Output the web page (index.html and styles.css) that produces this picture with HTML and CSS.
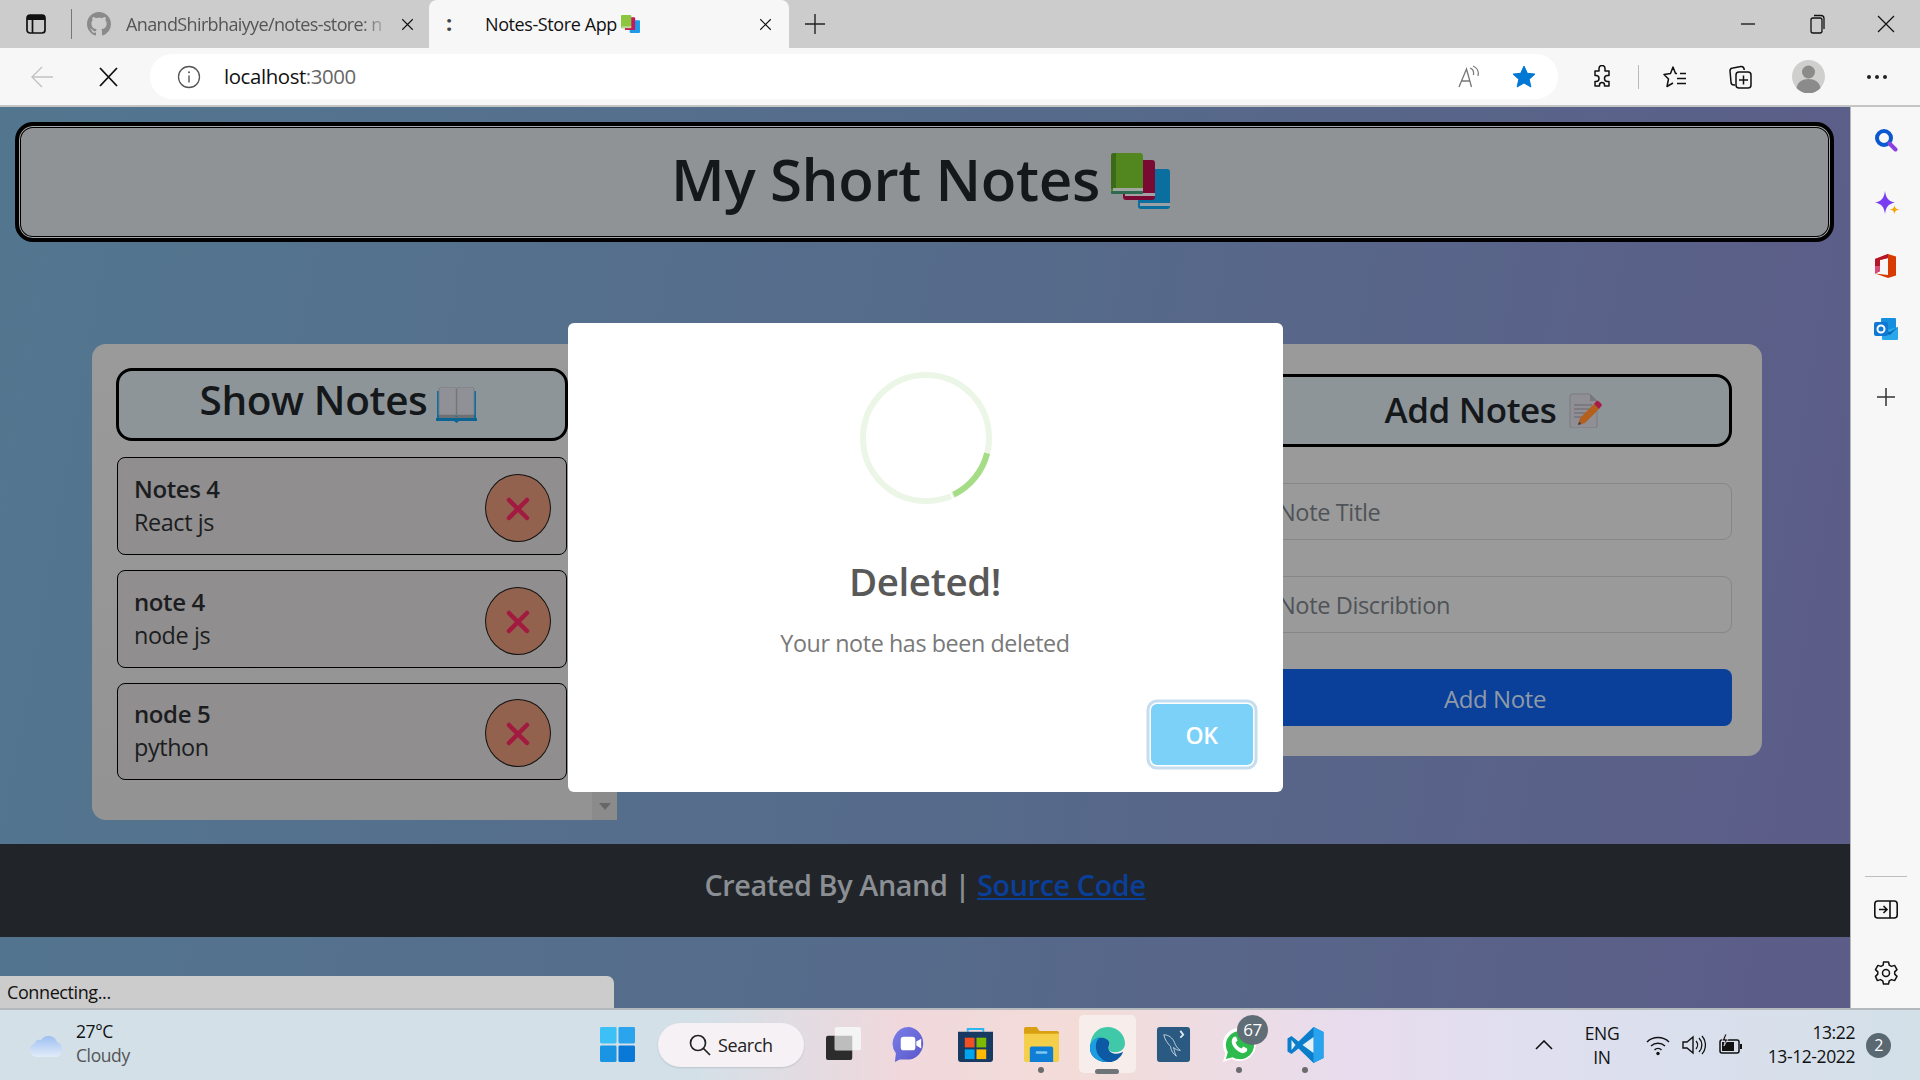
FILE: index.html
```html
<!DOCTYPE html>
<html lang="en">
<head>
<meta charset="utf-8">
<title>Notes-Store App</title>
<link rel="stylesheet" href="styles.css">
</head>
<body>
<svg class="defs" width="0" height="0" aria-hidden="true">
  <symbol id="books" viewBox="0 0 59 56">
    <rect x="27" y="16" width="32" height="40" rx="3" fill="#0a6f9f"/>
    <rect x="29" y="50" width="30" height="3" fill="#9aa0a4"/>
    <rect x="12" y="7" width="32" height="40" rx="3" fill="#7a0a33"/>
    <rect x="14" y="40" width="30" height="3" fill="#a5a0a4"/>
    <rect x="0" y="0" width="32" height="41" rx="3" fill="#52861f"/>
    <path d="M3 0h2v36H0V3a3 3 0 0 1 3-3z" fill="#3c6a16"/>
    <rect x="2" y="35" width="30" height="3" fill="#a2a6a0"/>
    <rect x="0" y="38" width="32" height="3" rx="1" fill="#2d6a52"/>
  </symbol>
  <symbol id="books-bright" viewBox="0 0 59 56">
    <rect x="27" y="16" width="32" height="40" rx="3" fill="#1e9be8"/>
    <rect x="12" y="7" width="32" height="40" rx="3" fill="#c4185e"/>
    <rect x="0" y="0" width="32" height="41" rx="3" fill="#8cc63f"/>
    <rect x="2" y="36" width="30" height="3" fill="#e3e6df"/>
  </symbol>
  <symbol id="x" viewBox="0 0 20 20">
    <path d="M3 3l14 14M17 3L3 17" fill="none" stroke="currentColor" stroke-width="1.5"/>
  </symbol>
  <linearGradient id="teams-grad" x1="0" y1="0" x2="1" y2="1">
    <stop offset="0" stop-color="#7a7fe8"/>
    <stop offset="1" stop-color="#5a55c8"/>
  </linearGradient>
  <linearGradient id="cloud-grad" x1="0" y1="0" x2="0" y2="1">
    <stop offset="0" stop-color="#9dbff0"/>
    <stop offset="1" stop-color="#e2ecfa"/>
  </linearGradient>
</svg>

<header class="tabbar">
  <svg class="ic-toggle" viewBox="0 0 20 20"><rect x="1" y="1" width="18" height="18" rx="3" fill="none" stroke="#111" stroke-width="1.7"/><path d="M1 4a3 3 0 0 1 3-3h12a3 3 0 0 1 3 3v2H1z" fill="#111"/><path d="M6.5 6v13" stroke="#111" stroke-width="1.7"/></svg>
  <span class="tab-sep"></span>
  <svg class="ic-gh" viewBox="0 0 16 16"><path fill="#8a8a8a" d="M8 0C3.58 0 0 3.58 0 8c0 3.54 2.29 6.53 5.47 7.59.4.07.55-.17.55-.38 0-.19-.01-.82-.01-1.49-2.01.37-2.53-.49-2.69-.94-.09-.23-.48-.94-.82-1.13-.28-.15-.68-.52-.01-.53.63-.01 1.08.58 1.23.82.72 1.21 1.87.87 2.33.66.07-.52.28-.87.51-1.07-1.78-.2-3.64-.89-3.64-3.95 0-.87.31-1.59.82-2.15-.08-.2-.36-1.02.08-2.12 0 0 .67-.21 2.2.82.64-.18 1.32-.27 2-.27.68 0 1.36.09 2 .27 1.53-1.04 2.2-.82 2.2-.82.44 1.1.16 1.92.08 2.12.51.56.82 1.27.82 2.15 0 3.07-1.87 3.75-3.65 3.95.29.25.54.73.54 1.48 0 1.07-.01 1.93-.01 2.2 0 .21.15.46.55.38A8.013 8.013 0 0016 8c0-4.42-3.58-8-8-8z"/></svg>
  <span class="tab-title">AnandShirbhaiyye/notes-store: n</span>
  <svg class="ic-tabx first"><use href="#x"/></svg>
  <div class="tab-active">
    <span class="tab-dots">:</span>
    <span class="tab-name">Notes-Store App</span>
    <svg class="ic-fav"><use href="#books-bright"/></svg>
    <svg class="ic-tabx end"><use href="#x"/></svg>
  </div>
  <svg class="ic-plus" viewBox="0 0 20 20"><path d="M10 0v20M0 10h20" stroke="#222" stroke-width="1.4"/></svg>
  <div class="winctl">
    <svg viewBox="0 0 20 20"><path d="M3 10h14" stroke="#111" stroke-width="1.3"/></svg>
    <svg viewBox="0 0 20 20"><rect x="4" y="4" width="11" height="15" rx="2" fill="none" stroke="#111" stroke-width="1.3"/><path d="M7 1.500h7a3 3 0 0 1 3 3V15" fill="none" stroke="#111" stroke-width="1.3"/></svg>
    <svg viewBox="0 0 20 20"><path d="M2 2l16 16M18 2L2 18" stroke="#111" stroke-width="1.2"/></svg>
  </div>
</header>

<nav class="toolbar">
  <div class="tb-cell"><svg class="ic24" viewBox="0 0 24 24"><path d="M23 12H2M12 2L2 12l10 10" fill="none" stroke="#c2c2c2" stroke-width="1.4"/></svg></div>
  <div class="tb-cell"><svg class="ic24" viewBox="0 0 24 24"><path d="M4 3l17 18M21 3L4 21" stroke="#111" stroke-width="1.8"/></svg></div>
  <div class="address">
    <svg class="ic24" viewBox="0 0 24 24"><circle cx="12" cy="12" r="10.500" fill="none" stroke="#555" stroke-width="1.300"/><path d="M12 10.500v7" stroke="#555" stroke-width="1.400"/><circle cx="12" cy="7.300" r="1" fill="#555"/></svg>
    <span class="url">localhost<span class="url-port">:3000</span></span>
    <svg class="ic24 read" viewBox="0 0 24 24"><path d="M2 22L9.500 4 14.500 22M4.500 16h8" fill="none" stroke="#777" stroke-width="1.300"/><path d="M13 3c3 1 4 4 3.500 7M16 1c4 1.500 6 5.500 5 10" fill="none" stroke="#777" stroke-width="1.300"/></svg>
    <svg class="ic24" viewBox="0 0 24 24"><path d="M12 1l3.300 7.300 7.700.8-5.800 5.200 1.700 7.700L12 18l-6.900 4 1.700-7.700L1 9.100l7.700-.8z" fill="#0078d4" stroke="#0078d4" stroke-linejoin="round"/></svg>
  </div>
  <svg class="ic24 t-ext" viewBox="0 0 24 24"><path d="M9 3.500a3 3 0 0 1 6 0V6h4v4.500h-1.500a3 3 0 0 0 0 6H19V21h-4.500v-1a2.500 2.500 0 0 0-5 0v1H5v-4.500h1a3 3 0 0 0 0-6H5V6h4z" fill="none" stroke="#111" stroke-width="1.500" stroke-linejoin="round"/></svg>
  <span class="t-sep"></span>
  <svg class="ic24 t-fav" viewBox="0 0 24 24"><path d="M14 8.500h-1.500L10 2 7.500 8.500 1 9.500l4.500 4.500L4 21.500l6-3.500M17 8.500h6M14 13.500h9M14 18.500h9" fill="none" stroke="#111" stroke-width="1.500" stroke-linejoin="round"/></svg>
  <svg class="ic24 t-col" viewBox="0 0 24 24"><path d="M7 20H6a3 3 0 0 1-3-3L2 6a3 3 0 0 1 3-3l8-1.500c2-.2 3 1 3.300 3.500" fill="none" stroke="#111" stroke-width="1.500"/><rect x="8" y="7" width="15" height="16" rx="3" fill="none" stroke="#111" stroke-width="1.500"/><path d="M15.500 10.500v9M11 15h9" stroke="#111" stroke-width="1.500"/></svg>
  <svg class="ic-avatar" viewBox="0 0 33 33"><circle cx="16.500" cy="16.500" r="16.500" fill="#cfcfcd"/><circle cx="16.500" cy="12" r="6.500" fill="#8b8b8b"/><path d="M4.500 28c1-6 6-9 12-9s11 3 12 9a16 16 0 0 1-24 0z" fill="#8b8b8b"/></svg>
  <span class="t-more"><i></i><i></i><i></i></span>
</nav>

<div class="main">
  <main class="page">
    <div class="banner">
      <h1 class="banner-title">My Short Notes</h1>
      <svg class="ic-books"><use href="#books"/></svg>
    </div>

    <div class="columns">
      <section class="panel panel-list">
        <div class="panel-body">
          <div class="heading heading-show">
            <h2>Show Notes</h2>
            <svg class="ic-open" viewBox="0 0 41 36"><path d="M1 4h39v27H1z" fill="#0a6f9f"/><path d="M3 2a3 3 0 0 1 3-2h11c2 0 3.500 1 3.500 2 0-1 1.500-2 3.500-2h11a3 3 0 0 1 3 2v26H3z" fill="#8f9196" stroke="#7c7e83"/><path d="M20.500 2v27" stroke="#73757a" stroke-width="1.400"/><path d="M3 28h15l2.500 2 2.500-2h15v3H3z" fill="#6e7074"/><path d="M0 31h41v3H23l-2.500 2-2.500-2H0z" fill="#0a6592"/></svg>
          </div>
          <div class="note-list">
            <article class="note">
              <div class="note-text"><h3>Notes 4</h3><p>React js</p></div>
              <button class="note-del"><svg viewBox="0 0 24 24"><path d="M3 3l18 18M21 3L3 21"/></svg></button>
            </article>
            <article class="note">
              <div class="note-text"><h3>note 4</h3><p>node js</p></div>
              <button class="note-del"><svg viewBox="0 0 24 24"><path d="M3 3l18 18M21 3L3 21"/></svg></button>
            </article>
            <article class="note">
              <div class="note-text"><h3>node 5</h3><p>python</p></div>
              <button class="note-del"><svg viewBox="0 0 24 24"><path d="M3 3l18 18M21 3L3 21"/></svg></button>
            </article>
          </div>
        </div>
        <div class="scrollbar"><span class="scroll-down"></span></div>
      </section>

      <section class="panel panel-form">
        <div class="heading heading-add">
          <h2>Add Notes</h2>
          <svg class="ic-memo" viewBox="0 0 33 35"><path d="M1 3a2 2 0 0 1 2-2h18l7 7v25a2 2 0 0 1-2 2H3a2 2 0 0 1-2-2z" fill="#8f8f95" stroke="#7a7a80"/><path d="M21 1v7h7z" fill="#77777c"/><path d="M5 12h18M5 16h18M5 20h12M5 24h8" stroke="#66666c" stroke-width="1.200"/><path d="M9 32l2-7L25 11l5 5-14 14z" fill="#b4601c"/><path d="M25 11l2-2.500a2 2 0 0 1 3 0l2 2a2 2 0 0 1 0 3L30 16z" fill="#a81c45"/><path d="M9 32l1-3.500 2.500 2.500z" fill="#3d3d3d"/></svg>
        </div>
        <input class="field" type="text" placeholder="Note Title">
        <input class="field" type="text" placeholder="Note Discribtion">
        <button class="add-btn">Add Note</button>
      </section>
    </div>

    <footer class="footer">Created By Anand | <a href="#">Source Code</a></footer>

    <div class="status">Connecting...</div>

    <div class="overlay">
      <div class="modal">
        <svg class="spinner" viewBox="0 0 132 132">
          <circle cx="66" cy="66" r="63" fill="none" stroke="#ecf6e6" stroke-width="6"/>
          <path d="M127.100 81.200A63 63 0 0 1 93.600 122.600" fill="none" stroke="#a5dc86" stroke-width="6"/>
          <path d="M90 120.500l3 6" stroke="#fff" stroke-width="1.500"/>
        </svg>
        <h2 class="modal-title">Deleted!</h2>
        <p class="modal-text">Your note has been deleted</p>
        <div class="modal-actions"><button class="ok-btn">OK</button></div>
      </div>
    </div>
  </main>

  <aside class="sidebar">
    <svg class="side-ic" viewBox="0 0 24 24"><circle cx="10" cy="10" r="7" fill="none" stroke="#0a58d0" stroke-width="4"/><path d="M15.500 15.500l6 6" stroke="#8a3fe0" stroke-width="4" stroke-linecap="round"/></svg>
    <svg class="side-ic side-star" viewBox="0 0 26 26"><path d="M11 0c1 7.500 3.500 10 10 11.500-6.500 1.500-9 4-10 11.500C10 15.500 7.500 13 1 11.500 7.500 10 10 7.500 11 0z" fill="#7a3cf0"/><path d="M20.500 14c.5 3 1.500 4 5 4.500-3.500.5-4.500 1.500-5 5-.5-3.500-1.500-4.500-5-5 3.500-.5 4.500-1.500 5-4.500z" fill="#f0a80c"/></svg>
    <svg class="side-ic" viewBox="0 0 24 24"><path d="M14 0l8 2.500v19L14 24 1 19.500l13 1.500V4L6 6v11l-5 2.500V5z" fill="#d83b01"/><path d="M14 0L1 5v14.500L6 17V6l8-2z" fill="#b5172a"/><path d="M1 12v7.500L6 17v-5z" fill="#d84a7c"/></svg>
    <svg class="side-ic" viewBox="0 0 24 24"><rect x="7" y="1" width="15" height="12" rx="1" fill="#1490df"/><path d="M24 10v12a1 1 0 0 1-1 1H9a1 1 0 0 1-1-1V14z" fill="#28a8ea"/><path d="M24 10l-8 5-8-2v3l8 2z" fill="#0a6cb8"/><rect x="0" y="5" width="14" height="14" rx="2" fill="#0f78d4"/><circle cx="7" cy="12" r="3.500" fill="none" stroke="#fff" stroke-width="2"/></svg>
    <svg class="side-ic side-plus" viewBox="0 0 24 24"><path d="M12 3v18M3 12h18" stroke="#333" stroke-width="1.500"/></svg>
    <div class="side-bottom">
      <span class="side-sep"></span>
      <svg class="side-ic" viewBox="0 0 24 24"><rect x="0.800" y="3" width="22.400" height="17" rx="3" fill="none" stroke="#111" stroke-width="1.600"/><path d="M16 3v17M5 11.500h8M9.500 8l3.500 3.500L9.500 15" fill="none" stroke="#111" stroke-width="1.600"/></svg>
      <svg class="side-ic" viewBox="0 0 24 24"><path d="M9.500 1h5l.8 3.200 2.200 1.200 3.100-1 2.400 4.200-2.300 2.300v2.200l2.300 2.300-2.400 4.200-3.100-1-2.200 1.200-.8 3.200h-5l-.8-3.200-2.200-1.200-3.100 1L1.500 15.400l2.300-2.300v-2.200L1.500 8.600l2.400-4.200 3.100 1 2.200-1.200z" fill="none" stroke="#111" stroke-width="1.500" stroke-linejoin="round"/><circle cx="12" cy="12" r="3.500" fill="none" stroke="#111" stroke-width="1.500"/></svg>
    </div>
  </aside>
</div>

<footer class="taskbar">
  <div class="tk-left">
    <svg class="ic-weather" viewBox="0 0 36 24"><path d="M8 23a7 7 0 0 1-2.500-13.500A5.500 5.500 0 0 1 12 6 9 9 0 0 1 28 8a8 8 0 0 1 0 15z" fill="url(#cloud-grad)"/></svg>
    <div class="tk-weather"><span class="tk-temp">27°C</span><span class="tk-cond">Cloudy</span></div>
  </div>
  <div class="tk-apps">
    <div class="tk-app">
      <svg class="tk-ic" viewBox="0 0 36 36"><rect width="17" height="17" x="0" y="0" rx="1.500" fill="#3cc0f6"/><rect width="17" height="17" x="19" y="0" rx="1.500" fill="#2aa4ec"/><rect width="17" height="17" x="0" y="19" rx="1.500" fill="#1a95e4"/><rect width="17" height="17" x="19" y="19" rx="1.500" fill="#0a78d6"/></svg>
    </div>
    <div class="tk-search">
      <svg class="ic-search" viewBox="0 0 22 22"><circle cx="9" cy="9" r="7.500" fill="none" stroke="#222" stroke-width="1.700"/><path d="M14.500 14.500l6.500 6.500" stroke="#222" stroke-width="1.700"/></svg>
      <span>Search</span>
    </div>
    <div class="tk-app">
      <svg class="tk-ic" viewBox="0 0 36 36"><rect x="0" y="9" width="27" height="25" rx="2" fill="#2c2c2c"/><rect x="9" y="0" width="27" height="24" rx="2" fill="#f4f4f4"/><rect x="9" y="9" width="18" height="15" fill="#bdbdbd"/></svg>
    </div>
    <div class="tk-app">
      <svg class="tk-ic" viewBox="0 0 36 36"><path d="M18 0a17 17 0 0 1 0 33.500H8L3 36l1-9A17 17 0 0 1 18 0z" fill="url(#teams-grad)"/><rect x="9" y="10" width="15" height="14" rx="3" fill="#fff"/><path d="M25 15l5-3v10l-5-3z" fill="#fff"/></svg>
    </div>
    <div class="tk-app">
      <svg class="tk-ic" viewBox="0 0 36 36"><path d="M10 5V2h16v3" fill="none" stroke="#2fb6f0" stroke-width="2"/><path d="M0 5h36v28a3 3 0 0 1-3 3H3a3 3 0 0 1-3-3z" fill="#173a63"/><rect x="7" y="11" width="10" height="10" fill="#f25022"/><rect x="19" y="11" width="10" height="10" fill="#7fba00"/><rect x="7" y="23" width="10" height="10" fill="#00a4ef"/><rect x="19" y="23" width="10" height="10" fill="#ffb900"/></svg>
    </div>
    <div class="tk-app dot">
      <svg class="tk-ic" viewBox="0 0 36 36"><path d="M0 2a2 2 0 0 1 2-2h11l3 4h18a2 2 0 0 1 2 2v4H0z" fill="#d9a013"/><path d="M0 7h36v27a2 2 0 0 1-2 2H2a2 2 0 0 1-2-2z" fill="#f6cf4a"/><path d="M8 20h20a2 2 0 0 1 2 2v14H6V22a2 2 0 0 1 2-2z" fill="#0f7ed4"/><rect x="12" y="25" width="12" height="2.500" rx="1" fill="#7cc8f2"/></svg>
    </div>
    <div class="tk-app edge">
      <svg class="tk-ic" viewBox="0 0 36 36"><path d="M18 0c10 0 18 7.500 18 17 0 6-5 9-10 9-4 0-7-1.500-7-4.500 0-1.500 1-2 1-4 0-3-3-5.500-7-5.500C7 12 2 17 0 22 0 9 7 0 18 0z" fill="#3fc9a8"/><path d="M0 22c0-6 5-11 12-11 4 0 8 2.500 8 6 0 1.500-1 2.500-1 4.500 0 3 3 6 8 6 2.500 0 5-.7 7-2-2 6-8 11-16 11C8 36 0 30 0 22z" fill="#0c59a4"/><path d="M0 22C0 15 5 11 11 10c-3 2-5 5-5 10 0 7 5 14 12 16C8 36 0 30 0 22z" fill="#1b9de2"/></svg>
      <span class="edge-bar"></span>
    </div>
    <div class="tk-app">
      <svg class="tk-ic" viewBox="0 0 36 36"><rect width="34" height="36" x="1" rx="3" fill="#2a5a82"/><path d="M8 8c5 0 9 3 11 8 1 3 3 6 6 8-3 0-5-1-7-3 1 3 1 6 3 9-3-2-6-6-6-10-3-3-6-7-7-12z" fill="none" stroke="#bcd0de" stroke-width="1"/><path d="M25 4l3 4-3 3" fill="none" stroke="#e3edf4" stroke-width="1.800"/></svg>
    </div>
    <div class="tk-app dot">
      <svg class="tk-ic" viewBox="0 0 36 36"><path d="M1 36l2.500-9A17 17 0 1 1 10 33z" fill="#fff"/><path d="M4 33l2-7A14.500 14.500 0 1 1 11 31z" fill="#2dbb4e"/><path d="M13 10c-1 0-3 2-3 5 0 5 6 11 11 12 3 0 5-2 5-3.500l-.3-1.500-3.700-2-2 2c-3-1-5-3-6-6l2-2-1.500-4z" fill="#fff"/></svg>
      <span class="badge">67</span>
    </div>
    <div class="tk-app dot">
      <svg class="tk-ic vs" viewBox="0 0 36 36"><path d="M26 0l10 5v26l-10 5-15-14.500L4 27l-4-2.500v-13L4 9l7 5.500z" fill="#0a7ecb"/><path d="M26 0l10 5v26l-10 5z" fill="#2aa3ef"/><path d="M26 10L15 18l11 8z" fill="#e4eff6"/><path d="M4 13l4 5-4 5z" fill="#e4eff6"/></svg>
    </div>
  </div>
  <div class="tk-tray">
    <svg class="ic-chev" viewBox="0 0 18 10"><path d="M1 9l8-8 8 8" fill="none" stroke="#111" stroke-width="1.600"/></svg>
    <div class="tk-lang"><span>ENG</span><span>IN</span></div>
    <svg class="tray-ic wifi" viewBox="0 0 24 24"><path d="M1 9a16 16 0 0 1 22 0M5 13a10.500 10.500 0 0 1 14 0M8.500 17a5 5 0 0 1 7 0" fill="none" stroke="#111" stroke-width="1.500"/><circle cx="12" cy="20.500" r="1.700" fill="#111"/></svg>
    <svg class="tray-ic vol" viewBox="0 0 24 24"><path d="M1 9v6h4l6 5V4L5 9z" fill="none" stroke="#111" stroke-width="1.400"/><path d="M14 8a6 6 0 0 1 0 8M17 5a10 10 0 0 1 0 14M20 3a13.500 13.500 0 0 1 0 18" fill="none" stroke="#111" stroke-width="1.300"/></svg>
    <svg class="tray-ic bat" viewBox="0 0 24 24"><rect x="1" y="7" width="19" height="13" rx="2" fill="none" stroke="#111" stroke-width="1.500"/><rect x="3" y="9" width="12" height="9" fill="#111"/><rect x="21" y="11" width="2" height="5" fill="#111"/><path d="M6 1L3 8h3l-1 5 4-7H6l2-5z" fill="#111" stroke="#e4dfee" stroke-width=".8"/></svg>
    <div class="tk-clock"><span>13:22</span><span>13-12-2022</span></div>
    <span class="tk-notif">2</span>
  </div>
</footer>
</body>
</html>
```

FILE: styles.css
```css
* { box-sizing: border-box; }
html, body { margin: 0; padding: 0; }
body {
  width: 1920px;
  height: 1080px;
  overflow: hidden;
  display: flex;
  flex-direction: column;
  font-family: "Open Sans", "Noto Sans", sans-serif;
  letter-spacing: -0.025em;
  color: #111;
}
h1, h2, h3, p { margin: 0; font-weight: 400; }
button, input { font: inherit; letter-spacing: inherit; }
svg { display: block; flex: none; }
.defs { position: absolute; }

/* Tab strip */
.tabbar {
  height: 48px;
  flex: none;
  display: flex;
  align-items: center;
  padding-left: 26px;
  background: #cccccc;
}
.ic-toggle { width: 20px; height: 20px; }
.tab-sep { width: 1px; height: 30px; margin-left: 25px; background: #777; }
.ic-gh { width: 24px; height: 24px; margin-left: 15px; }
.tab-title {
  width: 261px;
  margin-left: 15px;
  font-size: 18px;
  letter-spacing: -0.035em;
  white-space: nowrap;
  color: #555;
  -webkit-mask-image: linear-gradient(to right, #000 90%, rgba(0,0,0,.15));
  mask-image: linear-gradient(to right, #000 90%, rgba(0,0,0,.15));
}
.ic-tabx { width: 15px; height: 15px; color: #111; }
.ic-tabx.first { margin-left: 13px; }
.tab-active {
  width: 360px;
  height: 48px;
  margin-left: 14px;
  display: flex;
  align-items: center;
  padding-left: 16px;
  background: #f7f7f7;
  border-radius: 8px 8px 0 0;
}
.tab-dots { width: 8px; font-size: 22px; font-weight: 700; line-height: 1; margin-top: -4px; color: #444; text-align: center; }
.tab-name { margin-left: 32px; font-size: 18px; color: #111; }
.ic-fav { width: 19px; height: 18px; margin-left: 4px; }
.ic-tabx.end { margin-left: auto; margin-right: 16px; }
.ic-plus { width: 20px; height: 20px; margin-left: 16px; }
.winctl { margin-left: auto; display: flex; gap: 49px; padding-right: 24px; }
.winctl svg { width: 20px; height: 20px; }

/* Toolbar */
.toolbar {
  height: 59px;
  flex: none;
  display: flex;
  align-items: center;
  padding: 0 0 0 9px;
  background: #f7f7f7;
  border-bottom: 2px solid #c4c4c4;
}
.ic24 { width: 24px; height: 24px; }
.tb-cell { width: 66px; display: flex; justify-content: center; }
.address {
  width: 1408px;
  height: 45px;
  margin-left: 9px;
  display: flex;
  align-items: center;
  padding: 0 22px 0 27px;
  background: #fff;
  border-radius: 22px;
}
.url { margin: -2px 0 0 23px; font-size: 20.4px; color: #111; }
.url-port { color: #666; }
.read { margin-left: auto; margin-right: 31px; }
.t-ext { margin-left: 32px; }
.t-sep { width: 1px; height: 24px; margin-left: 24px; background: #bbb; }
.t-fav { margin-left: 24px; }
.t-col { margin-left: 41px; }
.ic-avatar { width: 33px; height: 33px; margin-left: 40px; }
.t-more { margin-left: 42px; display: flex; gap: 4px; }
.t-more i { width: 4px; height: 4px; border-radius: 50%; background: #222; }

/* Page */
.main { flex: 1; min-height: 0; display: flex; }
.page {
  position: relative;
  width: 1851px;
  padding-top: 15px;
  background: linear-gradient(100deg, #53768f 0%, #566a8a 55%, #5c5c88 100%);
  border-right: 1px solid #b8b8b8;
  overflow: hidden;
}
.banner {
  width: 1819px;
  height: 120px;
  margin-left: 15px;
  padding: 0 8px 6px 0;
  display: flex;
  align-items: center;
  justify-content: center;
  gap: 11px;
  background: #8f9396;
  border: 4px solid #000;
  border-radius: 18px;
  box-shadow: inset 0 0 0 1px #a5a8aa, inset 0 0 0 2px #000;
}
.banner-title { font-size: 58.300px; font-weight: 600; line-height: 1; color: #15181b; }
.ic-books { width: 59px; height: 56px; margin-top: 4px; }

.columns {
  display: flex;
  justify-content: space-between;
  align-items: flex-start;
  margin-top: 102px;
  padding: 0 88px 0 92px;
}
.panel { background: #9a9a9a; border-radius: 14px; }
.panel-list {
  width: 525px;
  height: 476px;
  display: flex;
  overflow: hidden;
  border-radius: 14px 0 0 14px;
  background: linear-gradient(#9a9a9a, #939393);
}
.panel-body { width: 500px; padding: 24px 24px 0; }
.scrollbar {
  width: 25px;
  display: flex;
  align-items: flex-end;
  justify-content: center;
  padding-bottom: 10px;
  background: #8b8b8b;
}
.scroll-down {
  width: 0;
  height: 0;
  border: 6px solid transparent;
  border-top: 7px solid #676767;
  border-bottom: 0;
}
.panel-form {
  width: 534px;
  height: 412px;
  padding: 30px 30px 0;
  display: flex;
  flex-direction: column;
}
.heading {
  height: 73px;
  display: flex;
  align-items: center;
  justify-content: center;
  flex: none;
  background: #8e9599;
  border: 3px solid #000;
  border-radius: 16px;
  color: #15181b;
}
.heading-show { gap: 9px; padding-right: 7px; }
.heading-show h2 { font-size: 40.500px; font-weight: 600; line-height: 1; margin-top: -8px; }
.ic-open { width: 41px; height: 36px; }
.heading-add { gap: 12px; padding-right: 4px; padding-bottom: 3px; }
.heading-add h2 { font-size: 35px; font-weight: 600; line-height: 1; }
.ic-memo { width: 33px; height: 35px; margin-top: 2px; }

.note-list { margin: 16px 1px 0; display: flex; flex-direction: column; gap: 15px; }
.note {
  height: 98px;
  display: flex;
  align-items: center;
  justify-content: space-between;
  padding: 0 15px 0 16px;
  background: #908e8e;
  border: 1px solid #000;
  border-radius: 8px;
  color: #1b1d20;
}
.note:last-child { height: 97px; }
.note-text { margin-top: -2px; }
.note-text h3 { font-size: 24px; font-weight: 600; line-height: 33px; }
.note-text p { margin-top: 1px; font-size: 23.400px; line-height: 33px; }
.note-del {
  width: 66px;
  height: 68px;
  margin-top: 3px;
  padding: 2px 0 0;
  display: flex;
  align-items: center;
  justify-content: center;
  background: #92624e;
  border: 1px solid #111;
  border-radius: 50%;
}
.note-del svg { width: 24px; height: 24px; }
.note-del path { fill: none; stroke: #a31a40; stroke-width: 4.500; stroke-linecap: round; }

.field {
  height: 57px;
  margin-top: 36px;
  flex: none;
  padding: 1px 19px 0;
  font-size: 23.600px;
  background: transparent;
  border: 1px solid #868686;
  border-radius: 9px;
  outline: none;
}
.field::placeholder { color: #4f5358; opacity: 1; }
.add-btn {
  height: 57px;
  margin-top: 36px;
  flex: none;
  padding: 1px 0 0;
  font-size: 24px;
  color: #8f9aa8;
  background: #0a4099;
  border: 0;
  border-radius: 8px;
}

.footer {
  height: 93px;
  margin-top: 24px;
  padding-bottom: 12px;
  display: flex;
  align-items: center;
  justify-content: center;
  font-size: 28.800px;
  font-weight: 600;
  white-space: pre;
  color: #8b8f94;
  background: #212529;
}
.footer a { color: #0a3f99; text-decoration: underline; }

.status {
  position: absolute;
  left: 0;
  bottom: 0;
  width: 614px;
  height: 32px;
  padding: 4px 0 0 7px;
  font-size: 18px;
  line-height: 24px;
  color: #111;
  background: #cccccc;
  border-radius: 0 7px 0 0;
}
.overlay {
  position: absolute;
  inset: 0;
  display: flex;
  align-items: center;
  justify-content: center;
}
.modal {
  width: 715px;
  height: 469px;
  padding-top: 49px;
  display: flex;
  flex-direction: column;
  align-items: center;
  background: #fff;
  border-radius: 6px;
}
.spinner { width: 132px; height: 132px; margin-left: 2px; }
.modal-title { margin-top: 50px; font-size: 38.500px; font-weight: 600; line-height: 54px; color: #595959; }
.modal-text { margin-top: 19px; font-size: 23.300px; line-height: 32px; color: #797979; }
.modal-actions { align-self: flex-end; margin-top: 45px; margin-right: 30px; }
.ok-btn {
  display: block;
  width: 102px;
  height: 61px;
  padding: 0;
  font-size: 23px;
  font-weight: 600;
  color: #fff;
  background: #7cd1f9;
  border: 0;
  border-radius: 6px;
  box-shadow: 0 0 0 1.500px #fff, 0 0 0 4.500px #c5ddee;
}

/* Edge sidebar */
.sidebar {
  flex: 1;
  padding-top: 17px;
  display: flex;
  flex-direction: column;
  align-items: center;
  gap: 31px;
  background: #f7f7f7;
}
.side-ic { width: 24px; height: 24px; margin: 4px 0; }
.side-star { width: 26px; height: 26px; margin: 4px 0 2px 2px; }
.side-plus { margin-top: 9px; }
.side-bottom {
  margin-top: auto;
  padding-bottom: 23px;
  display: flex;
  flex-direction: column;
  align-items: center;
  gap: 21px;
}
.side-sep { width: 42px; height: 1px; background: #bdbdbd; }
.side-bottom .side-ic { margin: 0; }
.side-bottom .side-ic + .side-ic { margin-top: 18px; }

/* Windows taskbar */
.taskbar {
  height: 72px;
  flex: none;
  display: flex;
  align-items: stretch;
  border-top: 2px solid #b4b9bd;
  background: linear-gradient(90deg, #d3e0e8 0%, #d3e0e8 36%, #f0d8dc 47%, #f3dcd8 56%, #e8dced 70%, #dfdff0 80%, #d3e0e8 100%);
}
.tk-left { width: 584px; flex: none; display: flex; align-items: center; padding-left: 29px; }
.ic-weather { width: 36px; height: 24px; margin-top: 2px; }
.tk-weather { margin-left: 11px; margin-top: -3px; display: flex; flex-direction: column; font-size: 17.500px; line-height: 23.500px; }
.tk-temp { color: #111; }
.tk-cond { color: #555; }
.tk-apps { display: flex; align-items: center; }
.tk-app {
  position: relative;
  width: 66px;
  height: 70px;
  display: flex;
  align-items: center;
  justify-content: center;
}
.tk-ic { width: 35px; height: 35px; margin-top: -1px; }
.tk-ic.vs { width: 37px; height: 36px; }
.tk-app.dot::after {
  content: "";
  position: absolute;
  left: 30px;
  bottom: 7px;
  width: 6px;
  height: 6px;
  border-radius: 50%;
  background: #6b6b6b;
}
.tk-app.edge::before {
  content: "";
  position: absolute;
  left: 5px;
  top: 5px;
  width: 57px;
  height: 58px;
  border-radius: 5px;
  background: #f7eeeb;
}
.tk-app.edge .tk-ic { position: relative; }
.edge-bar {
  position: absolute;
  left: 21px;
  bottom: 6px;
  width: 24px;
  height: 5px;
  border-radius: 3px;
  background: #6f7478;
}
.tk-search {
  width: 146px;
  height: 44px;
  margin: 0 6px 0 8px;
  display: flex;
  align-items: center;
  padding-left: 31px;
  gap: 7px;
  font-size: 18px;
  color: #222;
  background: #f6f1f4;
  border-radius: 22px;
  box-shadow: 0 1px 2px rgba(0,0,0,.12);
}
.ic-search { width: 22px; height: 22px; }
.badge {
  position: absolute;
  left: 31px;
  top: 5px;
  width: 31px;
  height: 30px;
  text-align: center;
  font-size: 17px;
  line-height: 30px;
  color: #fff;
  background: #5f6d76;
  border-radius: 50%;
}
.tk-tray { margin-left: auto; display: flex; align-items: center; padding-right: 29px; }
.ic-chev { width: 18px; height: 10px; }
.tk-lang {
  width: 60px;
  margin-left: 19px;
  display: flex;
  flex-direction: column;
  align-items: center;
  font-size: 17.500px;
  line-height: 24px;
  color: #111;
}
.tray-ic { width: 24px; height: 24px; }
.wifi { margin-left: 14px; }
.vol { margin-left: 12px; }
.bat { margin-left: 13px; }
.tk-clock {
  margin-left: 10px;
  width: 102px;
  margin-top: -2px;
  display: flex;
  flex-direction: column;
  align-items: flex-end;
  font-size: 17.500px;
  line-height: 24px;
  color: #111;
}
.tk-notif {
  width: 25px;
  height: 25px;
  margin-left: 11px;
  text-align: center;
  font-size: 16px;
  line-height: 25px;
  color: #fff;
  background: #5a6872;
  border-radius: 50%;
}
```
